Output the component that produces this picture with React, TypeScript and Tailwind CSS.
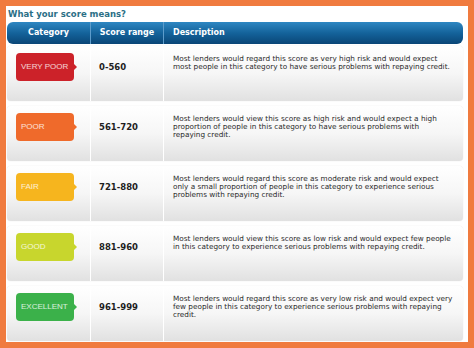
const rows = [
  {
    label: "VERY POOR",
    badge: "bg-[#cc2229]",
    arrow: "border-l-[#cc2229]",
    range: "0-560",
    lines: [
      "Most lenders would regard this score as very high risk and would expect",
      "most people in this category to have serious problems with repaying credit.",
    ],
  },
  {
    label: "POOR",
    badge: "bg-[#ef6a2b]",
    arrow: "border-l-[#ef6a2b]",
    range: "561-720",
    lines: [
      "Most lenders would view this score as high risk and would expect a high",
      "proportion of people in this category to have serious problems with",
      "repaying credit.",
    ],
  },
  {
    label: "FAIR",
    badge: "bg-[#f6b51e]",
    arrow: "border-l-[#f6b51e]",
    range: "721-880",
    lines: [
      "Most lenders would regard this score as moderate risk and would expect",
      "only a small proportion of people in this category to experience serious",
      "problems with repaying credit.",
    ],
  },
  {
    label: "GOOD",
    badge: "bg-[#c8d62d]",
    arrow: "border-l-[#c8d62d]",
    range: "881-960",
    lines: [
      "Most lenders would view this score as low risk and would expect few people",
      "in this category to experience serious problems with repaying credit.",
    ],
  },
  {
    label: "EXCELLENT",
    badge: "bg-[#3bb14a]",
    arrow: "border-l-[#3bb14a]",
    range: "961-999",
    lines: [
      "Most lenders would regard this score as very low risk and would expect very",
      "few people in this category to experience serious problems with repaying",
      "credit.",
    ],
  },
];

export default function App() {
  return (
    <div className="w-[474px] h-[348px] bg-[#f07b3f] p-[6px]">
      <div className="h-full bg-white pl-[1px] pr-[5px] flex flex-col">
        <h2 className="h-[16px] leading-[17px] pl-[1px] text-[8.5px] font-bold text-[#2b6f86] font-['DejaVu_Sans',sans-serif]">
          What your score means?
        </h2>

        <div className="h-[22px] rounded-[6px] bg-gradient-to-b from-[#2e87c2] via-[#14639b] to-[#0a4677] grid grid-cols-[84px_73px_1fr] text-white text-[8px] font-bold font-['DejaVu_Sans',sans-serif]">
          <div className="flex items-center justify-center border-r border-[#5d9ccb]">Category</div>
          <div className="flex items-center justify-center border-r border-[#5d9ccb]">Score range</div>
          <div className="flex items-center pl-[9px]">Description</div>
        </div>

        <div className="mt-[2px] flex flex-col gap-[5px]">
          {rows.map((row) => (
            <div
              key={row.label}
              className="h-[55px] rounded-[4px] bg-gradient-to-b from-white via-[#f6f6f6] to-[#e1e1e1] shadow-[0_0_1px_rgba(0,0,0,0.18)] grid grid-cols-[84px_73px_1fr]"
            >
              <div className="pl-[9px] pt-[7px] border-r border-white">
                <div className={`relative w-[58px] h-[28px] rounded-[4px] ${row.badge} flex items-center pl-[5px]`}>
                  <span className="text-[8px] text-white/80 font-['Liberation_Sans',sans-serif] whitespace-nowrap">
                    {row.label}
                  </span>
                  <span
                    className={`absolute -right-[3px] top-1/2 -translate-y-1/2 w-0 h-0 border-y-[3px] border-y-transparent border-l-[3px] ${row.arrow}`}
                  />
                </div>
              </div>
              <div className="pl-[8px] pt-[7px] border-r border-white">
                <div className="h-[28px] flex items-center text-[8.5px] font-bold text-[#1e1e1e] font-['DejaVu_Sans',sans-serif]">
                  {row.range}
                </div>
              </div>
              <div className="pl-[9px] pt-[9px] text-[7.3px] leading-[8px] text-[#2a2a2a] font-['DejaVu_Sans',sans-serif] whitespace-nowrap">
                {row.lines.map((line, i) => (
                  <div key={i}>{line}</div>
                ))}
              </div>
            </div>
          ))}
        </div>
      </div>
    </div>
  );
}
